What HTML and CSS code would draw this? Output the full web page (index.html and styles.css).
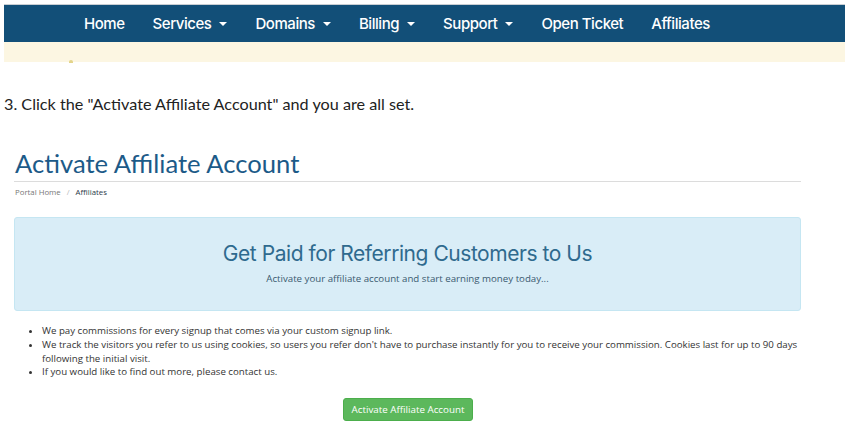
FILE: index.html
```html
<!DOCTYPE html>
<html>
<head>
<meta charset="utf-8">
<link rel="stylesheet" href="styles.css">
</head>
<body>
<div class="shot-top">
  <nav class="navbar">
    <ul class="nav">
      <li>Home</li>
      <li>Services <span class="caret"></span></li>
      <li>Domains <span class="caret"></span></li>
      <li>Billing <span class="caret"></span></li>
      <li>Support <span class="caret"></span></li>
      <li>Open Ticket</li>
      <li>Affiliates</li>
    </ul>
  </nav>
  <div class="notice"><span class="dot"></span></div>
</div>

<p class="step">3. Click the "Activate Affiliate Account" and you are all set.</p>

<div class="shot">
  <h1 class="page-title">Activate Affiliate Account</h1>
  <div class="breadcrumb"><span class="crumb">Portal Home</span><span class="sep">/</span><span class="active">Affiliates</span></div>
  <div class="alert">
    <h2>Get Paid for Referring Customers to Us</h2>
    <p>Activate your affiliate account and start earning money today...</p>
  </div>
  <ul class="points">
    <li>We pay commissions for every signup that comes via your custom signup link.</li>
    <li>We track the visitors you refer to us using cookies, so users you refer don't have to purchase instantly for you to receive your commission. Cookies last for up to 90 days following the initial visit.</li>
    <li>If you would like to find out more, please contact us.</li>
  </ul>
  <div class="actions"><button class="btn">Activate Affiliate Account</button></div>
</div>
</body>
</html>
```
FILE: styles.css
```css
html, body { margin: 0; padding: 0; background: #fff; }
body { font-family: "Open Sans", sans-serif; }

.shot-top { margin: 4px 0 0 4px; border-top: 1px solid #c9ced3; }
.navbar { background: #124f78; height: 37px; display: flex; align-items: center; }
.nav { list-style: none; margin: 0; padding: 0 0 0 80px; display: flex; gap: 28px; }
.nav li { color: #fff; font-family: "Inter", sans-serif; font-size: 15px; letter-spacing: -0.45px; font-weight: 500; display: flex; align-items: center; gap: 6px; }
.caret { width: 0; height: 0; border-left: 4px solid transparent; border-right: 4px solid transparent; border-top: 4px solid #fff; margin-left: 2px; }
.notice { background: #fcf6e2; height: 20px; position: relative; }
.dot { position: absolute; left: 65px; bottom: -1px; width: 4px; height: 3px; background: #e3d48a; border-radius: 2px 2px 0 0; }

.step { font-family: "Lato", sans-serif; font-size: 16.2px; color: #222; margin: 32px 0 0 4px; line-height: 19px; }

.shot { margin: 34px 0 0 14px; width: 787px; }
.page-title { font-family: "Lato", sans-serif; font-weight: 400; font-size: 25.6px; color: #1c5a88; margin: 0; padding: 0 0 1px 1px; border-bottom: 1px solid #dcdcdc; line-height: 33px; }
.breadcrumb { font-size: 7.8px; color: #777; margin-top: 5px; padding-left: 1px; }
.breadcrumb .sep { color: #bbb; margin: 0 6px; }
.breadcrumb .active { color: #2b3a4a; }

.alert { margin-top: 20px; background: #d9edf7; border: 1px solid #c5e6f2; border-radius: 3px; height: 94px; text-align: center; box-sizing: border-box; padding-top: 23px; }
.alert h2 { margin: 0; font-family: "Inter", sans-serif; font-weight: 400; font-size: 21px; letter-spacing: -0.45px; color: #2f6a8e; line-height: 26px; }
.alert p { margin: 5px 0 0; font-size: 9.7px; color: #3a5a70; }

.points { margin: 13px 0 0; padding-left: 28px; font-size: 9.7px; color: #333; line-height: 13.8px; }
.points li { padding-left: 0; }

.actions { text-align: center; margin-top: 17px; padding-left: 1px; }
.btn { background: #5cb85c; border: 1px solid #4cae4c; color: #fff; font-family: "Open Sans", sans-serif; font-size: 9.8px; border-radius: 3px; padding: 0 6px; height: 23px; width: 130px; }
```
